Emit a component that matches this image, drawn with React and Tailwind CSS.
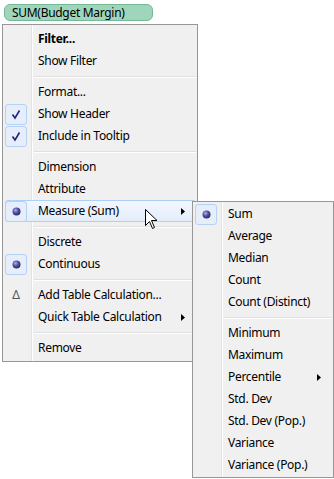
import React from 'react';

const font = { fontFamily: '"Noto Sans", "Open Sans", Arial, sans-serif' };

const mainItems = [
  { label: 'Filter...', bold: true },
  { label: 'Show Filter' },
  'sep',
  { label: 'Format...' },
  { label: 'Show Header', icon: 'check' },
  { label: 'Include in Tooltip', icon: 'check' },
  'sep',
  { label: 'Dimension' },
  { label: 'Attribute' },
  { label: 'Measure (Sum)', icon: 'radio', arrow: true, active: true },
  'sep',
  { label: 'Discrete' },
  { label: 'Continuous', icon: 'radio' },
  'sep',
  { label: 'Add Table Calculation...', icon: 'delta' },
  { label: 'Quick Table Calculation', arrow: true },
  'sep',
  { label: 'Remove' },
];

const subItems = [
  { label: 'Sum', icon: 'radio' },
  { label: 'Average' },
  { label: 'Median' },
  { label: 'Count' },
  { label: 'Count (Distinct)' },
  'sep',
  { label: 'Minimum' },
  { label: 'Maximum' },
  { label: 'Percentile', arrow: true },
  { label: 'Std. Dev' },
  { label: 'Std. Dev (Pop.)' },
  { label: 'Variance' },
  { label: 'Variance (Pop.)' },
];

function Radio() {
  return (
    <svg width="9" height="9" viewBox="0 0 9 9">
      <defs>
        <radialGradient id="rb" cx="0.38" cy="0.35" r="0.7">
          <stop offset="0" stopColor="#b4b4ec" />
          <stop offset="0.45" stopColor="#5656a8" />
          <stop offset="1" stopColor="#24245e" />
        </radialGradient>
      </defs>
      <circle cx="4.5" cy="4.5" r="4" fill="url(#rb)" />
    </svg>
  );
}

function Check() {
  return (
    <svg width="10" height="11" viewBox="0 0 10 11">
      <path d="M1.5 5.5 L4 9 L8.5 1.5" fill="none" stroke="#24247a" strokeWidth="1.6" />
    </svg>
  );
}

function Arrow() {
  return (
    <svg width="4" height="7" viewBox="0 0 4 7">
      <path d="M0 0 L4 3.5 L0 7 Z" fill="#000" />
    </svg>
  );
}

function Icon({ type }) {
  if (type === 'delta') {
    return <div className="w-[22px] h-[20px] flex items-center justify-center text-[12px] text-[#555]">Δ</div>;
  }
  if (!type) return <div className="w-[22px] h-[20px]" />;
  return (
    <div className="w-[22px] h-[21px] flex items-center justify-center rounded-[3px] border border-[#b5d1f3] bg-[#e5eefa]">
      {type === 'check' ? <Check /> : <Radio />}
    </div>
  );
}

function MenuRow({ item }) {
  if (item === 'sep') {
    return (
      <div className="h-[9px] flex flex-col justify-center pl-[31px] pr-[1px]">
        <div className="h-px bg-[#e0e0e0]" />
        <div className="h-px bg-white" />
      </div>
    );
  }
  return (
    <div
      className={`relative h-[22px] flex items-center ml-[2px] mr-[1px] rounded-[3px] border ${
        item.active ? 'border-[#aecff7] bg-gradient-to-b from-[#f2f7fe] to-[#e3edfa]' : 'border-transparent'
      }`}
    >
      <div className="w-[33px] flex items-center -ml-px">
        <Icon type={item.icon} />
      </div>
      <span
        className={`flex-1 text-[12px] tracking-[-0.3px] text-black whitespace-nowrap ${item.bold ? 'font-bold' : ''}`}
      >
        {item.label}
      </span>
      {item.arrow && (
        <div className="w-[14px] flex items-center">
          <Arrow />
        </div>
      )}
    </div>
  );
}

function Menu({ items, className }) {
  return (
    <div className={`absolute border border-[#979797] bg-[#f0f0f0] ${className}`} style={font}>
      <div className="absolute top-0 bottom-0 left-[28px] w-[2px] border-l border-[#e2e3e3] border-r border-r-white" />
      {items.map((item, i) => (
        <MenuRow key={i} item={item} />
      ))}
    </div>
  );
}

export default function App() {
  return (
    <div className="relative w-[334px] h-[479px] bg-white overflow-hidden" style={font}>
      <div className="pt-[4px] pl-[4px]">
        <div className="w-[149px] h-[17px] rounded-[6px] border border-[#74b996] bg-[#9fd5ba] flex items-center pl-[7px] text-[12px] tracking-[-0.3px] text-black leading-none">
          SUM(Budget Margin)
        </div>
      </div>

      <Menu items={mainItems} className="left-[2px] top-[24px] w-[196px] pt-[3px] pb-[2px]" />
      <Menu items={subItems} className="left-[192px] top-[201px] w-[142px] pt-[1px] pb-[1px]" />

      <svg className="absolute left-[145px] top-[209px]" width="13" height="21" viewBox="0 0 13 21">
        <path
          d="M0.5 0.5 L0.5 16.5 L4.5 12.5 L7.5 19.5 L9.5 18.5 L6.5 11.5 L12 11.5 Z"
          fill="#fff"
          stroke="#000"
          strokeWidth="1"
          strokeLinejoin="miter"
        />
      </svg>
    </div>
  );
}
